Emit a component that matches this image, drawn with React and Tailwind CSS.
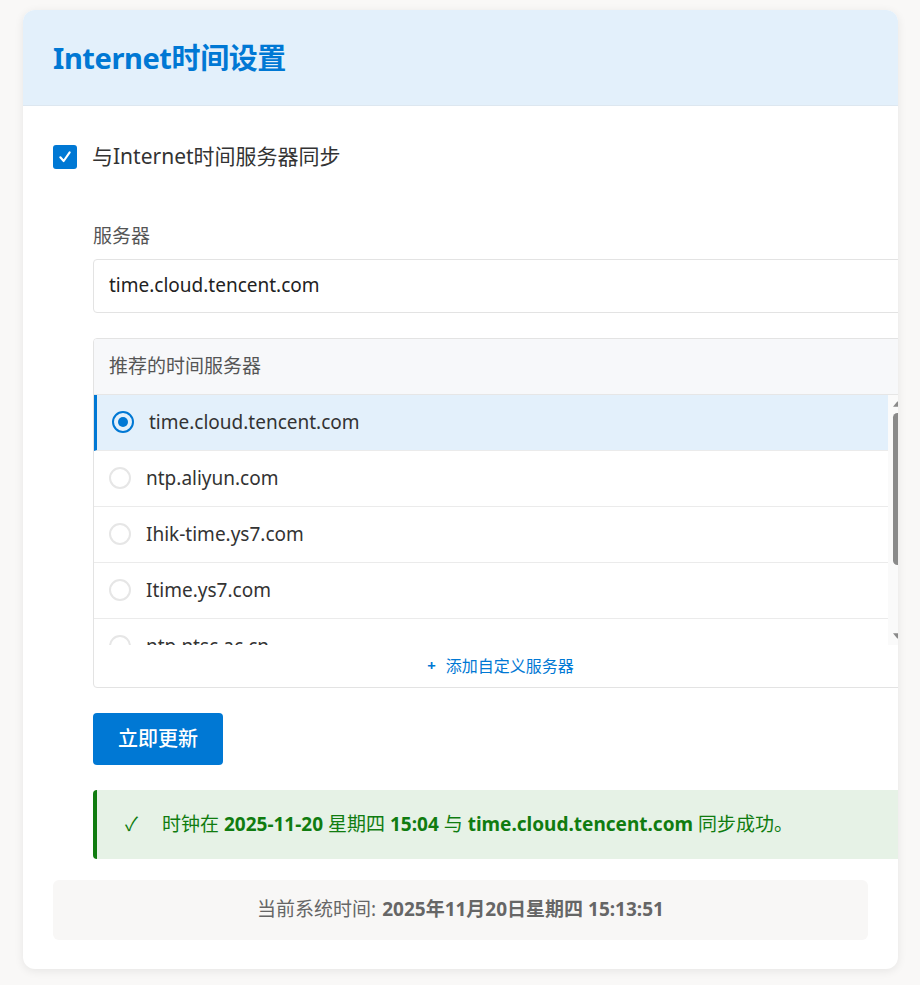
import { useState } from 'react';

const servers = [
  'time.cloud.tencent.com',
  'ntp.aliyun.com',
  'Ihik-time.ys7.com',
  'Itime.ys7.com',
  'ntp.ntsc.ac.cn',
  'cn.ntp.org.cn',
  'pool.ntp.org',
];

const font = { fontFamily: '"Noto Sans", "Noto Sans CJK SC", sans-serif' };

const Radio = ({ checked }) =>
  checked ? (
    <span className="w-[22px] h-[22px] rounded-full border-2 border-[#0078d4] flex items-center justify-center shrink-0">
      <span className="w-[10px] h-[10px] rounded-full bg-[#0078d4]" />
    </span>
  ) : (
    <span className="w-[22px] h-[22px] rounded-full border-2 border-[#e6e6e6] shrink-0" />
  );

// drawn scrollbar, the native one is hidden in the screenshot browser
const ScrollBar = () => (
  <div className="w-[19px] shrink-0 bg-[#fafafa] flex flex-col items-center py-[6px]">
    <svg viewBox="0 0 10 6" className="w-[9px] h-[6px]" fill="#8a8a8a">
      <polygon points="5,0 10,6 0,6" />
    </svg>
    <div className="mt-[6px] w-[9px] h-[152px] rounded-full bg-[#8a8a8a]" />
    <div className="flex-1" />
    <svg viewBox="0 0 10 6" className="w-[9px] h-[6px]" fill="#8a8a8a">
      <polygon points="0,0 10,0 5,6" />
    </svg>
  </div>
);

export default function App() {
  const [selected, setSelected] = useState(servers[0]);
  const [sync, setSync] = useState(true);

  return (
    <div
      className="min-h-screen bg-[#f9f8f7] pl-[23px] pr-[22px] pt-[10px] pb-[16px] text-[#333]"
      style={font}
    >
      <div className="bg-white rounded-xl overflow-hidden shadow-[0_2px_10px_rgba(0,0,0,0.08)]">
        {/* Header */}
        <div className="h-[96px] bg-[#e3f0fb] border-b border-[#dde7f0] px-[30px] flex items-center">
          <h1 className="text-[29px] font-bold text-[#0078d4] tracking-[-0.4px]">Internet时间设置</h1>
        </div>

        <div className="px-[30px] pt-[35px] pb-[29px]">
          {/* Sync checkbox */}
          <label className="flex items-center gap-[15px] cursor-pointer" onClick={() => setSync(!sync)}>
            <span className="w-[24px] h-[24px] rounded-[3px] bg-[#0078d4] flex items-center justify-center">
              {sync && (
                <svg viewBox="0 0 24 24" className="w-[16px] h-[16px]" fill="none" stroke="white" strokeWidth="3.2" strokeLinecap="round" strokeLinejoin="round">
                  <polyline points="5,12.5 10,18 19,5" />
                </svg>
              )}
            </span>
            <span className="text-[21px] text-[#333]">与Internet时间服务器同步</span>
          </label>

          <div className="ml-[40px] w-full">
            <div className="mt-[49px] text-[19px] text-[#555] leading-[28px]">服务器</div>
            <div className="mt-[9px] h-[54px] border border-[#e3e3e3] rounded-[4px] px-[15px] flex items-center text-[19px] text-[#222]">
              {selected}
            </div>

            {/* Recommended servers */}
            <div className="mt-[25px] border border-[#e3e3e3] rounded-[4px] overflow-hidden">
              <div className="h-[56px] bg-[#f7f8fa] border-b border-[#e6e6e6] px-[15px] flex items-center text-[19px] text-[#555]">
                推荐的时间服务器
              </div>
              <div className="flex h-[250px]">
                <div className="flex-1 overflow-y-auto [scrollbar-width:none]">
                  {servers.map((s) => {
                    const active = s === selected;
                    return (
                      <div
                        key={s}
                        onClick={() => setSelected(s)}
                        className={
                          active
                            ? 'h-[56px] flex items-center gap-[15px] pl-[15px] bg-[#e3f0fb] border-l-[3px] border-[#0078d4] border-b border-b-[#ebebeb] text-[19px] text-[#333] cursor-pointer'
                            : 'h-[56px] flex items-center gap-[15px] pl-[15px] border-b border-[#ebebeb] text-[19px] text-[#333] cursor-pointer'
                        }
                      >
                        <Radio checked={active} />
                        <span>{s}</span>
                      </div>
                    );
                  })}
                </div>
                <ScrollBar />
              </div>
              <div className="h-[42px] flex items-center justify-center gap-[10px] text-[16px] text-[#0078d4]">
                <span className="font-bold text-[15px]">+</span>
                <span>添加自定义服务器</span>
              </div>
            </div>

            <button className="mt-[25px] h-[52px] px-[25px] rounded-[4px] bg-[#0078d4] text-white text-[20px] font-medium">
              立即更新
            </button>

            <div className="mt-[25px] h-[69px] bg-[#e6f2e6] border-l-4 border-[#107c10] rounded-l-[4px] flex items-center pl-[28px] text-[19px] text-[#107c10]">
              <span className="mr-[24px]">✓</span>
              <span>
                时钟在 <b>2025-11-20</b> 星期四 <b>15:04</b> 与 <b>time.cloud.tencent.com</b> 同步成功。
              </span>
            </div>
          </div>

          {/* Current time */}
          <div className="mt-[21px] h-[60px] bg-[#f8f7f6] rounded-md flex items-center justify-center text-[19px] text-[#666]">
            当前系统时间: <b className="ml-[6px]">2025年11月20日星期四 15:13:51</b>
          </div>
        </div>
      </div>
    </div>
  );
}
